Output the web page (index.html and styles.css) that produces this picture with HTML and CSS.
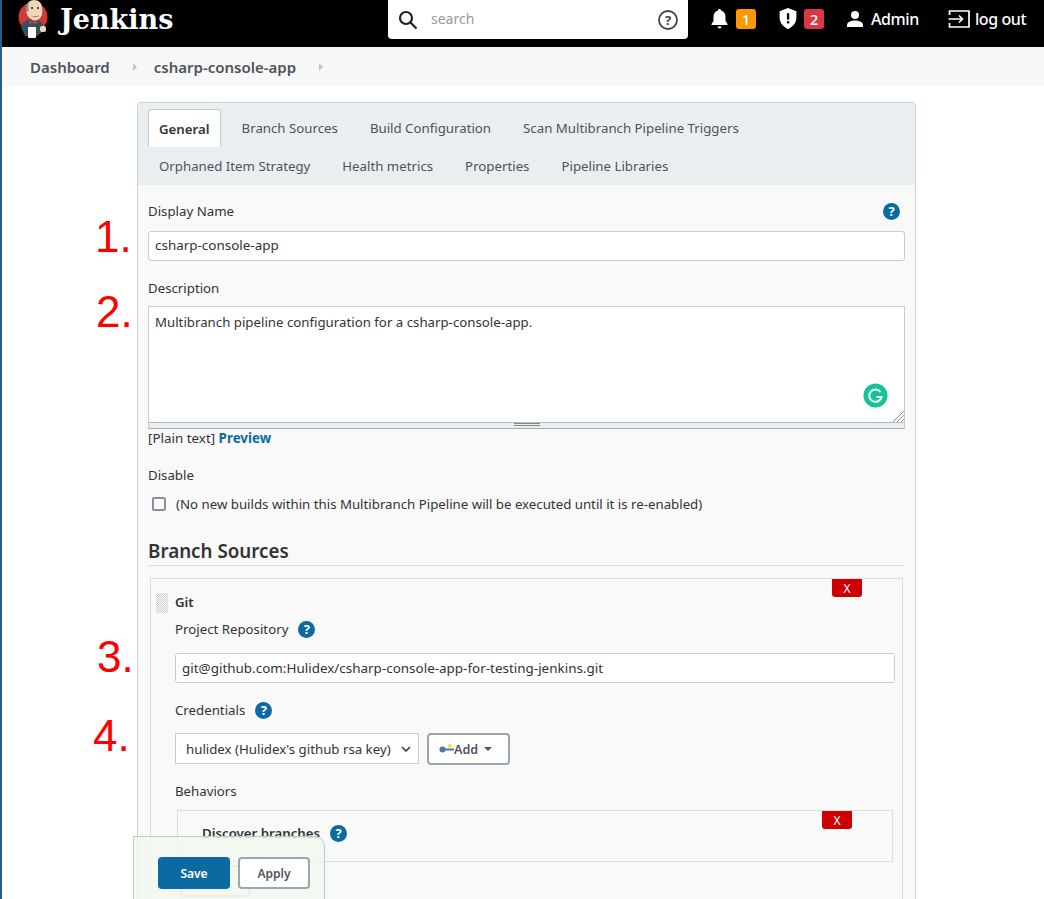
FILE: index.html
```html
<!DOCTYPE html>
<html lang="en">
<head>
    <meta charset="UTF-8">
    <meta name="viewport" content="width=device-width, initial-scale=1.0">
    <title>csharp-console-app Config [Jenkins]</title>
    <link rel="stylesheet" href="styles.css">
</head>
<body>
    <header class="topbar">
        <a class="brand">
            <svg class="logo" width="31" height="38" viewBox="0 0 31 38">
                <circle cx="15" cy="17" r="14.500" fill="#d33833"/>
                <path d="M3 27c2-6 6-8 11-8s9 2 11 6l-1 7-5 4H7z" fill="#335061"/>
                <path d="M8 9c0-5 3-9 8-9s8 3 8 8c1 4 0 9-3 11-3 2-6 2-8 0-3-2-5-5-5-10z" fill="#f0d6b7"/>
                <path d="M8 12c-1-4 0-8 3-10-1 3-1 6 0 9z" fill="#8a8888"/>
                <path d="M13 15c2 2 6 2 8 0-1 3-6 3-8 0z" fill="#7c3b2b"/>
                <circle cx="14" cy="8" r="1" fill="#222"/>
                <circle cx="20" cy="8" r="1" fill="#222"/>
                <path d="M11 20l4 2 4-2v4l-4-1-4 1z" fill="#d33833"/>
                <rect x="10" y="27" width="8" height="11" rx="1" fill="#fff"/>
                <rect x="22" y="26" width="6" height="6" rx="2" fill="#f0d6b7"/>
            </svg>
            <span class="brand-name">Jenkins</span>
        </a>
        <div class="search">
            <svg width="20" height="20" viewBox="0 0 20 20" fill="none" stroke="#222" stroke-width="2.2"><circle cx="8" cy="8" r="6"/><path d="M12.5 12.5l6 6"/></svg>
            <span class="search-text">search</span>
            <svg class="search-help" width="22" height="22" viewBox="0 0 22 22"><circle cx="11" cy="11" r="9" fill="none" stroke="#444" stroke-width="1.8"/><text x="11" y="15.5" text-anchor="middle" font-size="13" font-weight="700" fill="#444" font-family="Noto Sans">?</text></svg>
        </div>
        <div class="top-item bell">
            <svg width="17" height="20" viewBox="0 0 16 20" fill="#fff"><path d="M8 0c1 0 1.500.7 1.500 1.600C12.300 2.300 14 4.700 14 8v4l2 3v1H0v-1l2-3V8c0-3.300 1.700-5.700 4.500-6.400C6.500.7 7 0 8 0z"/><path d="M6 17.500h4a2 2 0 0 1-4 0z"/></svg>
            <span class="badge orange">1</span>
        </div>
        <div class="top-item shield">
            <svg width="18" height="21" viewBox="0 0 16 20"><path d="M8 0l8 3v6c0 5-3.500 9-8 11-4.500-2-8-6-8-11V3z" fill="#fff"/><rect x="7" y="5" width="2.200" height="6" fill="#000"/><rect x="7" y="12.500" width="2.200" height="2.200" fill="#000"/></svg>
            <span class="badge red">2</span>
        </div>
        <div class="top-item user">
            <svg width="16" height="16" viewBox="0 0 16 16" fill="#fff"><circle cx="8" cy="4" r="4"/><path d="M0 16v-2c0-3 4-4.500 8-4.500s8 1.500 8 4.500v2z"/></svg>
            <span>Admin</span>
        </div>
        <div class="top-item logout">
            <svg width="24" height="18" viewBox="0 0 23 18" fill="none" stroke="#fff" stroke-width="1.700"><path d="M1 5V1h19.500v16H1v-4"/><path d="M0 9h14M10.500 5.500L14 9l-3.500 3.500"/></svg>
            <span>log out</span>
        </div>
    </header>

    <nav class="crumbs">
        <a>Dashboard</a>
        <span class="crumb-arrow"></span>
        <a>csharp-console-app</a>
        <span class="crumb-arrow"></span>
    </nav>

    <main class="config">
        <div class="tabs">
            <div class="tab-row">
                <a class="tab active">General</a>
                <a class="tab">Branch Sources</a>
                <a class="tab">Build Configuration</a>
                <a class="tab">Scan Multibranch Pipeline Triggers</a>
            </div>
            <div class="tab-row">
                <a class="tab">Orphaned Item Strategy</a>
                <a class="tab">Health metrics</a>
                <a class="tab">Properties</a>
                <a class="tab">Pipeline Libraries</a>
            </div>
        </div>

        <form class="form">
            <div class="label-row name-label">
                <label>Display Name</label>
                <span class="help">?</span>
            </div>
            <div class="input">csharp-console-app</div>

            <label class="desc-label">Description</label>
            <div class="textarea">
                Multibranch pipeline configuration for a csharp-console-app.
                <svg class="grammarly" width="25" height="25" viewBox="0 0 25 25"><circle cx="12.500" cy="12.500" r="12" fill="#15c39a"/><path d="M17.500 9a6.200 6.200 0 1 0 1 5h-5" fill="none" stroke="#fff" stroke-width="2"/></svg>
                <svg class="grip" width="11" height="11" viewBox="0 0 11 11" stroke="#888" stroke-width="1"><path d="M0 11L11 0M4 11l7-7M8 11l3-3"/></svg>
            </div>
            <div class="resize-bar"><span></span></div>
            <div class="plain">[Plain text] <a>Preview</a></div>

            <label class="disable-label">Disable</label>
            <div class="check-row">
                <span class="checkbox"></span>
                <span>(No new builds within this Multibranch Pipeline will be executed until it is re-enabled)</span>
            </div>

            <h3 class="section">Branch Sources</h3>

            <div class="source">
                <button type="button" class="x-btn">X</button>
                <div class="handle"></div>
                <div class="source-title">Git</div>
                <div class="label-row repo-label"><label>Project Repository</label><span class="help">?</span></div>
                <div class="input">git@github.com:Hulidex/csharp-console-app-for-testing-jenkins.git</div>
                <div class="label-row cred-label"><label>Credentials</label><span class="help">?</span></div>
                <div class="cred-row">
                    <div class="select">
                        <span>hulidex (Hulidex's github rsa key)</span>
                        <svg width="10" height="6" viewBox="0 0 10 6" fill="none" stroke="#333" stroke-width="1.500"><path d="M1 1l4 4 4-4"/></svg>
                    </div>
                    <button type="button" class="add-btn">
                        <svg width="15" height="10" viewBox="0 0 15 10"><circle cx="3.500" cy="5.500" r="3" fill="#4b78b0"/><rect x="5" y="4.500" width="10" height="2" fill="#4b78b0"/><circle cx="11" cy="2" r="2" fill="#f2e23c"/></svg>
                        <span>Add</span><i class="caret"></i>
                    </button>
                </div>
                <label class="behav-label">Behaviors</label>
                <div class="behavior">
                    <button type="button" class="x-btn">X</button>
                    <div class="label-row"><span class="behavior-title">Discover branches</span><span class="help">?</span></div>
                </div>
                <div class="ghost-btn"></div>
            </div>
        </form>

        <div class="notes">
            <span class="note note-1">1.</span>
            <span class="note note-2">2.</span>
            <span class="note note-3">3.</span>
            <span class="note note-4">4.</span>
        </div>
    </main>

    <div class="savebar">
        <button type="button" class="save">Save</button>
        <button type="button" class="apply">Apply</button>
    </div>
</body>
</html>
```

FILE: styles.css
```css
html, body {
    height: 899px;
    overflow: hidden;
}
body {
    margin: 0;
    position: relative;
    font-family: "Noto Sans", sans-serif;
    font-size: 13.25px;
    color: #333;
    background: #fff;
    border-left: 2px solid #2c5c86;
}
a {
    cursor: pointer;
}

/* top bar */
.topbar {
    height: 47px;
    margin-left: -2px;
    padding-left: 2px;
    background: #000;
    color: #fff;
    display: flex;
    align-items: center;
    box-shadow: inset 2px 0 0 #2c5c86;
    font-size: 16px;
    font-weight: 500;
    letter-spacing: -0.4px;
}
.brand {
    display: flex;
    align-items: center;
    width: 386px;
    padding-left: 16px;
    margin-top: -9px;
    box-sizing: border-box;
}
.logo {
    flex: none;
}
.brand-name {
    margin-left: 11px;
    font-family: "DejaVu Serif", serif;
    font-size: 27px;
    font-weight: 700;
    letter-spacing: 0;
}
.search {
    width: 300px;
    height: 39px;
    margin-top: -8px;
    padding: 0 9px 0 10px;
    box-sizing: border-box;
    background: #fff;
    border-radius: 0 0 4px 4px;
    display: flex;
    align-items: center;
    color: #999;
    font-size: 14px;
    font-weight: 400;
    letter-spacing: 0;
}
.search-text {
    margin-left: 13px;
    flex: 1;
    padding-bottom: 2px;
}
.search-help {
    flex: none;
}
.top-item {
    display: flex;
    align-items: center;
    margin-top: -10px;
}
.bell {
    margin-left: 23px;
    gap: 8px;
}
.shield {
    margin-left: 23px;
    gap: 7px;
}
.user {
    margin-left: 23px;
    gap: 8px;
}
.logout {
    margin-left: 29px;
    gap: 3px;
}
.badge {
    width: 20px;
    height: 20px;
    border-radius: 3px;
    text-align: center;
    line-height: 20px;
    font-size: 15px;
    letter-spacing: 0;
}
.orange {
    background: #ff9800;
}
.red {
    background: #dc3545;
}

/* breadcrumb */
.crumbs {
    height: 40px;
    padding-left: 28px;
    background: #f8f8f8;
    display: flex;
    align-items: center;
    font-size: 15px;
    font-weight: 600;
    color: #4d545d;
}
.crumb-arrow {
    width: 0;
    height: 0;
    margin: 0 17px 0 23px;
    border-left: 4px solid #c4c4c4;
    border-top: 4px solid transparent;
    border-bottom: 4px solid transparent;
}

/* config panel */
.config {
    width: 777px;
    margin: 15px 0 0 135px;
    border: 1px solid #ccd2d6;
    border-radius: 3px 3px 0 0;
    background: #f9f9f9;
    height: 900px;
}
.tabs {
    height: 82px;
    padding: 6px 0 0 10px;
    box-sizing: border-box;
    background: #e9eef1;
}
.tab-row {
    height: 38px;
    display: flex;
    gap: 10px;
}
.tab {
    height: 37px;
    padding: 0 11px;
    line-height: 38px;
    color: #4d545d;
    white-space: nowrap;
}
.tab.active {
    background: #fff;
    border: 1px solid #c3ccd1;
    border-bottom: 0;
    border-radius: 3px 3px 0 0;
    padding: 0 10px;
    font-weight: 600;
    color: #333;
}
.form {
    padding: 0 10px;
}
label {
    display: block;
    line-height: 20px;
}
.label-row {
    display: flex;
    align-items: center;
    height: 20px;
    gap: 10px;
}
.name-label {
    margin-top: 16px;
    justify-content: space-between;
    padding-right: 5px;
}
.help {
    width: 17px;
    height: 17px;
    border-radius: 50%;
    background: #0b6aa2;
    color: #fff;
    font-size: 13px;
    font-weight: 700;
    line-height: 17px;
    text-align: center;
}
.input {
    height: 30px;
    margin-top: 10px;
    padding-left: 6px;
    box-sizing: border-box;
    background: #fff;
    border: 1px solid #ccc;
    border-radius: 3px;
    font-size: 13.45px;
    line-height: 27px;
}
.desc-label {
    margin-top: 17px;
}
.textarea {
    position: relative;
    height: 116px;
    margin-top: 8px;
    padding: 5px 6px;
    box-sizing: border-box;
    background: #fff;
    border: 1px solid #ccc;
    border-bottom: 0;
    line-height: 20px;
}
.grammarly {
    position: absolute;
    right: 16px;
    bottom: 14px;
}
.grip {
    position: absolute;
    right: 0;
    bottom: 0;
}
.resize-bar {
    height: 5px;
    background: #e9eef1;
    border: 1px solid #ccc;
    border-top-color: #b5bcc1;
    border-bottom-color: #9fb0ba;
    position: relative;
}
.resize-bar span {
    display: block;
    width: 26px;
    height: 3px;
    margin: 0 auto;
    border-top: 1px solid #888;
    border-bottom: 1px solid #888;
    box-sizing: border-box;
}
.plain {
    margin-top: -1px;
    line-height: 20px;
    font-size: 13.4px;
}
.plain a {
    font-weight: 700;
    color: #0b6aa2;
}
.disable-label {
    margin-top: 17px;
}
.check-row {
    margin-top: 8px;
    height: 21px;
    display: flex;
    align-items: center;
    gap: 10px;
    padding-left: 4px;
}
.checkbox {
    width: 14px;
    height: 14px;
    box-sizing: border-box;
    border: 2px solid #8d8d9e;
    border-radius: 2px;
    background: #fff;
}
.section {
    margin: 24px 0 12px;
    padding-bottom: 1px;
    border-bottom: 1px solid #ddd;
    font-size: 18.8px;
    font-weight: 600;
    line-height: 26px;
}

/* git source block */
.source {
    position: relative;
    margin: 0 2px;
    height: 400px;
    padding: 14px 7px 0 24px;
    border: 1px solid #ddd;
    box-sizing: border-box;
}
.x-btn {
    position: absolute;
    top: 0;
    right: 40px;
    width: 30px;
    height: 18px;
    padding: 0;
    border: 0;
    border-radius: 0 0 3px 3px;
    background: #cc0003;
    color: #fff;
    font-family: inherit;
    font-size: 12px;
}
.handle {
    position: absolute;
    left: 5px;
    top: 14px;
    width: 12px;
    height: 20px;
    background: repeating-conic-gradient(#d0d0d0 0 25%, transparent 0 50%) 0 0 / 2px 2px;
}
.source-title {
    font-weight: 600;
    line-height: 18px;
}
.repo-label {
    margin-top: 8px;
}
.source .input {
    margin-top: 14px;
    line-height: 28px;
}
.cred-label {
    margin-top: 17px;
}
.cred-row {
    margin-top: 13px;
    display: flex;
    gap: 8px;
}
.select {
    width: 244px;
    height: 31px;
    box-sizing: border-box;
    padding: 0 7px 0 10px;
    background: #fff;
    border: 1px solid #ccc;
    display: flex;
    align-items: center;
    justify-content: space-between;
    white-space: nowrap;
}
.add-btn {
    width: 83px;
    height: 32px;
    box-sizing: border-box;
    padding: 0 0 0 10px;
    background: #fff;
    border: 2px solid #9aa7b2;
    border-radius: 4px;
    display: flex;
    align-items: center;
    font-family: inherit;
    font-size: 12.5px;
    font-weight: 600;
    color: #4d545d;
}
.caret {
    margin-left: 6px;
    border-top: 4px solid #4d545d;
    border-left: 4px solid transparent;
    border-right: 4px solid transparent;
}
.behav-label {
    margin-top: 16px;
}
.behavior {
    position: relative;
    margin: 9px 2px 0 2px;
    height: 52px;
    padding: 12px 0 0 24px;
    box-sizing: border-box;
    border: 1px solid #ddd;
}
.behavior-title {
    font-weight: 600;
}
.ghost-btn {
    width: 70px;
    height: 32px;
    margin: 3px 0 0 5px;
    border: 2px solid #ccc;
    border-radius: 4px;
    box-sizing: border-box;
}

/* red annotations drawn over the shot */
.note {
    position: absolute;
    color: #ff0000;
    font-family: "Liberation Sans", sans-serif;
    font-size: 44px;
    line-height: 50px;
}
.note-1 {
    left: 93px;
    top: 212px;
}
.note-2 {
    left: 94px;
    top: 287px;
}
.note-3 {
    left: 95px;
    top: 632px;
}
.note-4 {
    left: 91px;
    top: 711px;
}

/* floating save bar */
.savebar {
    position: absolute;
    left: 131px;
    top: 836px;
    width: 192px;
    height: 70px;
    box-sizing: border-box;
    padding: 20px 0 0 24px;
    display: flex;
    gap: 8px;
    align-items: flex-start;
    background: rgba(241, 247, 238, 0.8);
    border: 1px solid #b4d2bf;
    border-radius: 0 10px 0 0;
}
.save, .apply {
    width: 72px;
    height: 32px;
    border-radius: 4px;
    font-family: inherit;
    font-size: 12px;
    font-weight: 600;
}
.save {
    background: #0b6aa2;
    border: 0;
    color: #fff;
}
.apply {
    background: #fff;
    border: 2px solid #9aa7b2;
    color: #4d545d;
}
```
